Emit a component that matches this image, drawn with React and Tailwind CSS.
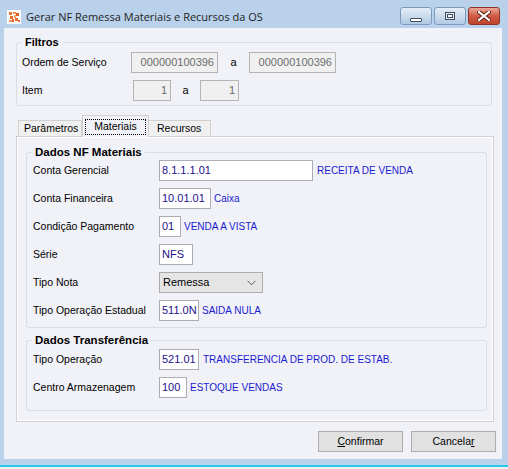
import React from "react";

const valueColor = "text-[#1e0f8c]";
const descColor = "text-[#1b1bd0] text-[10px]";

function TextBox({ w, value, className = "" }) {
  return (
    <div
      className={`h-[21px] ${w} border border-[#abadb3] bg-white flex items-center pl-[2px] ${valueColor} overflow-hidden whitespace-nowrap ${className}`}
    >
      {value}
    </div>
  );
}

function DisabledBox({ w, value }) {
  return (
    <div
      className={`h-[21px] ${w} border border-[#b4b4b4] bg-[#f0f0f0] flex items-center justify-end pr-[3px] text-[#6d6d6d]`}
    >
      {value}
    </div>
  );
}

function Row({ label, children, first }) {
  return (
    <div className={`flex items-center h-[21px] ${first ? "" : "mt-[7px]"}`}>
      <div className="w-[126px] text-[10.5px] text-[#000]">{label}</div>
      {children}
    </div>
  );
}

function WinBtn({ children, close }) {
  return (
    <div
      className={`w-[32px] h-[18px] rounded-[3px] border flex items-center justify-center ${
        close
          ? "border-[#8d3426] bg-linear-to-b from-[#e9a897] via-[#cf5a44] to-[#c0432d]"
          : "border-[#7d9abd] bg-linear-to-b from-[#e4edf8] via-[#ccdcee] to-[#b3cae5]"
      }`}
    >
      {children}
    </div>
  );
}

export default function App() {
  return (
    <div className="w-[508px] h-[469px] bg-[#b9d1ea] flex flex-col overflow-hidden font-['Liberation_Sans',Arial,sans-serif] text-[11px] text-black">
      {/* Title bar */}
      <div className="h-[28px] flex items-start shrink-0">
        <svg className="ml-[7px] mt-[10px]" width="14" height="14" viewBox="0 0 14 14">
          <rect x="0" y="0" width="14" height="14" fill="#ffffff" />
          <rect x="2" y="2" width="3" height="3" fill="#f07030" />
          <rect x="6" y="2" width="3" height="2" fill="#f48a4a" />
          <rect x="9" y="3" width="3" height="3" fill="#e85a20" />
          <rect x="3" y="6" width="3" height="3" fill="#ee6a2a" />
          <rect x="7" y="5" width="2" height="3" fill="#f39a5a" />
          <rect x="8" y="8" width="3" height="3" fill="#ee6a2a" />
          <rect x="2" y="10" width="3" height="2" fill="#f39a5a" />
          <rect x="5" y="9" width="2" height="3" fill="#e85a20" />
          <rect x="11" y="10" width="2" height="2" fill="#f07030" />
        </svg>
        <div className="ml-[5px] mt-[9px] leading-[16px] text-[11px] font-['Open_Sans','Noto_Sans',sans-serif] text-[#1e1e1e]">
          Gerar NF Remessa Materiais e Recursos da OS
        </div>
        <div className="ml-auto mr-[8px] mt-[7px] flex gap-[2px]">
          <WinBtn>
            <div className="w-[12px] h-[4px] mt-[7px] bg-white border border-[#3c4a5c] rounded-[1px]" />
          </WinBtn>
          <WinBtn>
            <div className="w-[10px] h-[8px] border border-[#3c4a5c] bg-[#e8eef6] flex items-center justify-center">
              <div className="w-[6px] h-[4px] border border-[#3c4a5c] bg-white" />
            </div>
          </WinBtn>
          <WinBtn close>
            <svg width="14" height="10" viewBox="0 0 14 10">
              <path d="M2 1 L12 9 M12 1 L2 9" stroke="#5a1a10" strokeWidth="4" strokeLinecap="square" />
              <path d="M2 1 L12 9 M12 1 L2 9" stroke="#ffffff" strokeWidth="2.2" strokeLinecap="square" />
            </svg>
          </WinBtn>
        </div>
      </div>

      {/* Content */}
      <div className="ml-[4px] w-[498px] h-[431px] shrink-0 bg-[#f1f2f7] pt-[8px] flex flex-col">
        {/* Filtros */}
        <fieldset className="ml-[12px] w-[476px] border border-[#d5dfe5] rounded-[3px] px-[5px] pb-[4px]">
          <legend className="-ml-[1px] px-[4px] font-bold leading-[13px]">Filtros</legend>
          <div className="flex items-center h-[21px] mt-[3px]">
            <div className="w-[109px] text-[10.5px]">Ordem de Serviço</div>
            <DisabledBox w="w-[87px]" value="000000100396" />
            <div className="w-[31px] text-center">a</div>
            <DisabledBox w="w-[87px]" value="000000100396" />
          </div>
          <div className="flex items-center h-[21px] mt-[7px]">
            <div className="w-[111px] text-[10.5px]">Item</div>
            <DisabledBox w="w-[38px]" value="1" />
            <div className="w-[29px] text-center">a</div>
            <DisabledBox w="w-[39px]" value="1" />
          </div>
        </fieldset>

        {/* Tabs */}
        <div className="mt-[9px] ml-[14px] flex items-end h-[21px] relative z-10 text-[10.5px]">
          <div className="w-[64px] h-[16px] border border-b-0 border-[#d0d0d0] bg-[#f0f0f0] flex items-center pl-[5px]">
            Parâmetros
          </div>
          <div className="w-[67px] h-[22px] -mb-[1px] border border-b-0 border-[#d0d0d0] bg-[#f1f2f7] pt-[3px] px-[2px]">
            <div className="h-[16px] border border-dotted border-black flex items-center justify-center">
              Materiais
            </div>
          </div>
          <div className="w-[62px] h-[16px] border border-b-0 border-l-0 border-[#d0d0d0] bg-[#f0f0f0] flex items-center pl-[8px]">
            Recursos
          </div>
        </div>

        {/* Panel */}
        <div className="ml-[12px] w-[478px] h-[286px] border border-[#d0d0d0] shadow-[inset_0_0_0_1px_#ffffff] bg-[#f1f2f7] pt-[9px] pl-[9px] shrink-0">
          <fieldset className="w-[461px] border border-[#d5dfe5] rounded-[3px] px-[6px] pb-[6px]">
            <legend className="-ml-[1px] px-[3px] font-bold leading-[13px] text-[11.5px]">Dados NF Materiais</legend>
            <div className="mt-[1px]" />
            <Row label="Conta Gerencial" first>
              <TextBox w="w-[154px]" value="8.1.1.1.01" />
              <span className={`ml-[4px] ${descColor}`}>RECEITA DE VENDA</span>
            </Row>
            <Row label="Conta Financeira">
              <TextBox w="w-[52px]" value="10.01.01" />
              <span className={`ml-[3px] ${descColor}`}>Caixa</span>
            </Row>
            <Row label="Condição Pagamento">
              <TextBox w="w-[22px]" value="01" />
              <span className={`ml-[3px] ${descColor}`}>VENDA A VISTA</span>
            </Row>
            <Row label="Série">
              <TextBox w="w-[34px]" value="NFS" />
            </Row>
            <Row label="Tipo Nota">
              <div className="h-[21px] w-[104px] border border-[#acacac] bg-[#e5e5e5] flex items-center pl-[3px] pr-[6px]">
                <span className="flex-1">Remessa</span>
                <svg width="9" height="6" viewBox="0 0 9 6">
                  <path d="M0.5 0.8 L4.5 4.8 L8.5 0.8" fill="none" stroke="#5a5a5a" strokeWidth="1" />
                </svg>
              </div>
            </Row>
            <Row label="Tipo Operação Estadual">
              <TextBox w="w-[40px]" value="511.0N" />
              <span className={`ml-[3px] ${descColor}`}>SAIDA NULA</span>
            </Row>
          </fieldset>

          <fieldset className="mt-[6px] w-[461px] border border-[#d5dfe5] rounded-[3px] px-[6px] pb-[12px]">
            <legend className="-ml-[1px] px-[3px] font-bold leading-[13px] text-[11.5px]">Dados Transferência</legend>
            <div className="mt-[2px]" />
            <Row label="Tipo Operação" first>
              <TextBox w="w-[40px]" value="521.01" />
              <span className={`ml-[4px] ${descColor}`}>TRANSFERENCIA DE PROD. DE ESTAB.</span>
            </Row>
            <Row label="Centro Armazenagem">
              <TextBox w="w-[28px]" value="100" />
              <span className={`ml-[3px] ${descColor}`}>ESTOQUE VENDAS</span>
            </Row>
          </fieldset>
        </div>

        {/* Buttons */}
        <div className="mt-[9px] flex justify-end gap-[8px] pr-[6px] text-[10.5px]">
          <div className="w-[85px] h-[21px] border border-[#adadad] bg-[#e1e1e1] flex items-center justify-center">
            <span>
              <span className="underline">C</span>onfirmar
            </span>
          </div>
          <div className="w-[85px] h-[21px] border border-[#adadad] bg-[#e1e1e1] flex items-center justify-center">
            <span>
              Cancela<span className="underline">r</span>
            </span>
          </div>
        </div>
      </div>
      <div className="h-[6px] shrink-0" />
      <div className="h-[2px] shrink-0 bg-[#2bc6ee]" />
      <div className="h-[2px] shrink-0 bg-[#eef0f2]" />
    </div>
  );
}
